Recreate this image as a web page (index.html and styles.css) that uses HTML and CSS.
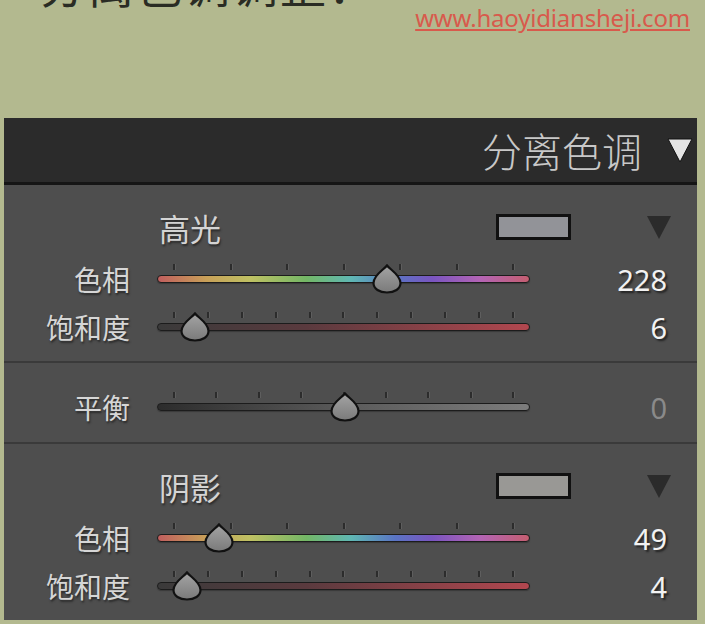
FILE: index.html
```html
<!DOCTYPE html>
<html lang="zh">
<head>
    <meta charset="UTF-8">
    <meta name="viewport" content="width=device-width, initial-scale=1.0">
    <title>分离色调</title>
    <link rel="stylesheet" href="styles.css">
</head>
<body>
    <div class="top">
        <div class="title">分离色调调整：</div>
        <a class="site" href="#">www.haoyidiansheji.com</a>
    </div>

    <div class="panel">
        <div class="panel-head">
            <span>分离色调</span>
            <svg class="head-arrow" width="26" height="25" viewBox="0 0 26 25">
                <polygon points="1,1 25,1 13,24" fill="#e4e4e4" stroke="#111" stroke-width="1"/>
            </svg>
        </div>

        <!-- 高光 -->
        <div class="section">
            <div class="sec-head">
                <span class="sec-title">高光</span>
                <span class="swatch high"></span>
                <svg class="sec-arrow" width="24" height="23" viewBox="0 0 24 23">
                    <polygon points="0,0 24,0 12,23" fill="#2b2b2b"/>
                </svg>
            </div>
            <div class="row">
                <span class="label">色相</span>
                <div class="slider">
                    <div class="ticks"><i></i><i></i><i></i><i></i><i></i><i></i><i></i></div>
                    <div class="track hue">
                        <svg class="thumb" style="left: 61.7%" width="30" height="30" viewBox="0 0 30 30"><use href="#drop"/></svg>
                    </div>
                </div>
                <span class="value">228</span>
            </div>
            <div class="row">
                <span class="label">饱和度</span>
                <div class="slider">
                    <div class="ticks"><i></i><i></i><i></i><i></i><i></i><i></i><i></i><i></i><i></i><i></i><i></i></div>
                    <div class="track sat">
                        <svg class="thumb" style="left: 9.9%" width="30" height="30" viewBox="0 0 30 30"><use href="#drop"/></svg>
                    </div>
                </div>
                <span class="value">6</span>
            </div>
        </div>

        <!-- 平衡 -->
        <div class="section balance">
            <div class="row">
                <span class="label">平衡</span>
                <div class="slider">
                    <div class="ticks"><i></i><i></i><i></i><i></i><i></i><i></i><i></i><i></i><i></i></div>
                    <div class="track bal">
                        <svg class="thumb" style="left: 50.4%" width="30" height="30" viewBox="0 0 30 30"><use href="#drop"/></svg>
                    </div>
                </div>
                <span class="value dim">0</span>
            </div>
        </div>

        <!-- 阴影 -->
        <div class="section last">
            <div class="sec-head">
                <span class="sec-title">阴影</span>
                <span class="swatch shadow"></span>
                <svg class="sec-arrow" width="24" height="23" viewBox="0 0 24 23">
                    <polygon points="0,0 24,0 12,23" fill="#2b2b2b"/>
                </svg>
            </div>
            <div class="row">
                <span class="label">色相</span>
                <div class="slider">
                    <div class="ticks"><i></i><i></i><i></i><i></i><i></i><i></i><i></i></div>
                    <div class="track hue">
                        <svg class="thumb" style="left: 16.4%" width="30" height="30" viewBox="0 0 30 30"><use href="#drop"/></svg>
                    </div>
                </div>
                <span class="value">49</span>
            </div>
            <div class="row">
                <span class="label">饱和度</span>
                <div class="slider">
                    <div class="ticks"><i></i><i></i><i></i><i></i><i></i><i></i><i></i><i></i><i></i><i></i><i></i></div>
                    <div class="track sat">
                        <svg class="thumb" style="left: 7.8%" width="30" height="30" viewBox="0 0 30 30"><use href="#drop"/></svg>
                    </div>
                </div>
                <span class="value">4</span>
            </div>
        </div>
    </div>

    <svg class="defs" width="0" height="0">
        <defs>
            <linearGradient id="dropFill" x1="0" y1="0" x2="0" y2="1">
                <stop offset="0" stop-color="#a4a4a4"/>
                <stop offset="1" stop-color="#7a7a7a"/>
            </linearGradient>
            <path id="drop" d="M15 1.5 C18 5.5 28.5 11 28.5 19 C28.5 25 22.5 28.5 15 28.5 C7.5 28.5 1.5 25 1.5 19 C1.5 11 12 5.5 15 1.5 Z"
                  fill="url(#dropFill)" stroke="#111" stroke-width="2.2"/>
        </defs>
    </svg>
</body>
</html>
```

FILE: styles.css
```css
body {
    margin: 0;
    padding: 0;
    background-color: #b3b98f;
    font-family: "Noto Sans CJK SC", "Noto Sans", sans-serif;
    width: 705px;
    height: 624px;
    overflow: hidden;
}
.top {
    height: 118px;
    display: flex;
    justify-content: space-between;
    align-items: flex-start;
    overflow: hidden;
}
.title {
    margin: -40px 0 0 40px;
    font-size: 46px;
    line-height: 1;
    letter-spacing: 2px;
    color: #2a2c24;
}
.site {
    margin: 6px 15px 0 0;
    font-family: "Noto Sans", sans-serif;
    font-size: 24px;
    line-height: 1;
    letter-spacing: -0.2px;
    color: #d85a4c;
    text-decoration: underline;
    text-underline-offset: 2px;
}
.panel {
    margin: 0 8px 0 4px;
    background: #4e4e4e;
    height: 502px;
}
.panel-head {
    height: 64px;
    background: #2b2b2b;
    border-bottom: 3px solid #151515;
    display: flex;
    align-items: center;
    justify-content: flex-end;
    padding-right: 4px;
    color: #c8c8c8;
    font-size: 40px;
    font-weight: 300;
}
.head-arrow {
    margin-left: 25px;
}
.section {
    padding: 22px 0 10px;
    border-bottom: 2px solid #3a3a3a;
}
.section.balance {
    padding: 20px 0 11px;
}
.section.last {
    border-bottom: none;
}
.sec-head {
    height: 40px;
    display: flex;
    align-items: center;
    padding: 0 26px 0 155px;
    margin-bottom: 8px;
}
.sec-title {
    flex: 1;
    font-size: 31px;
    color: #d4d4d4;
    text-shadow: 1px 2px 2px #2a2a2a;
}
.swatch {
    width: 69px;
    height: 20px;
    border: 3px solid #111;
}
.swatch.high {
    background: #929398;
}
.swatch.shadow {
    background: #999895;
}
.sec-arrow {
    margin-left: 76px;
}
.row {
    height: 48px;
    display: grid;
    grid-template-columns: 126px 373px 1fr;
    column-gap: 27px;
    align-items: center;
    padding-right: 30px;
}
.label {
    text-align: right;
    font-size: 28px;
    color: #d6d6d6;
    text-shadow: 1px 2px 2px #2a2a2a;
    line-height: 1;
}
.slider {
    display: flex;
    flex-direction: column;
    padding-bottom: 11px;
}
.ticks {
    height: 7px;
    display: flex;
    justify-content: space-between;
    padding: 0 16px;
    margin-bottom: 4px;
}
.ticks i {
    width: 2px;
    height: 6px;
    background: #2c2c2c;
    box-shadow: 1px 0 0 #5e5e5e;
}
.track {
    height: 6px;
    border: 1px solid #1c1c1c;
    border-radius: 5px;
    position: relative;
    box-shadow: 0 1px 1px #3a3a3a;
}
.track.hue {
    background: linear-gradient(to right, #c05e5e 0%, #c8a058 13%, #bfc163 25%, #73b766 40%, #5fb7b3 52%, #5a74c4 64%, #7a55c0 74%, #b464b4 87%, #c45e70 100%);
}
.track.sat {
    background: linear-gradient(to right, #3a3a3a 0%, #5a3a3e 40%, #b2474f 100%);
}
.track.bal {
    background: linear-gradient(to right, #2c2c2c 0%, #5a5a5a 50%, #7c7c7c 100%);
}
.thumb {
    position: absolute;
    top: 50%;
    transform: translate(-50%, -50%);
}
.value {
    text-align: right;
    font-family: "Noto Sans", sans-serif;
    font-size: 29px;
    line-height: 1;
    color: #f2f2f2;
    text-shadow: 2px 2px 2px #222;
}
.value.dim {
    color: #8a8a8a;
    text-shadow: none;
}
.defs {
    position: absolute;
}
```
